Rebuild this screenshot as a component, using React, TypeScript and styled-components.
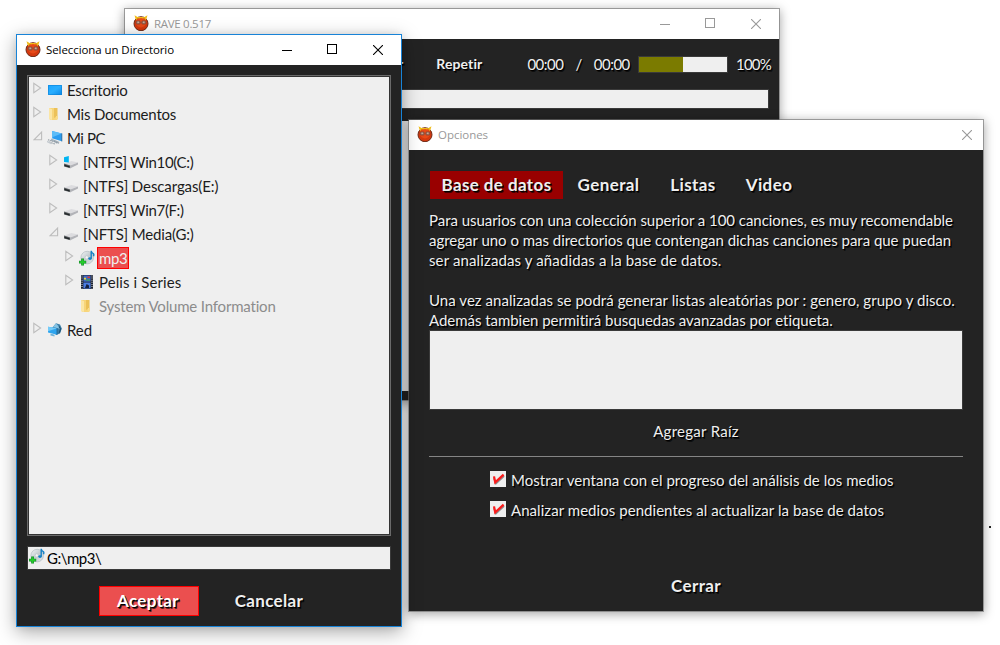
import React from 'react';
import styled, { createGlobalStyle, css } from 'styled-components';

const ink = '#232323';
const paper = '#efefef';

const GlobalStyle = createGlobalStyle`
  * { box-sizing: border-box; }
  body {
    margin: 0;
    background: #fff;
    font-family: Lato, Carlito, Calibri, sans-serif;
    font-size: 15px;
    overflow: hidden;
  }
`;

const Desktop = styled.div`
  position: relative;
  width: 1000px;
  height: 645px;
  overflow: hidden;
  background: #fff;
`;

/* ---------- window chrome ---------- */

type WindowProps = { $x: number; $y: number; $w: number; $h: number; $active?: boolean };

const Window = styled.section<WindowProps>`
  position: absolute;
  left: ${p => p.$x}px;
  top: ${p => p.$y}px;
  width: ${p => p.$w}px;
  height: ${p => p.$h}px;
  display: flex;
  flex-direction: column;
  background: ${ink};
  background-clip: padding-box;
  border: 1px solid ${p => (p.$active ? '#1883d7' : 'rgba(112, 112, 112, 0.62)')};
  box-shadow: ${p =>
    p.$active
      ? '0 5px 18px rgba(0, 0, 0, 0.34), 0 0 7px rgba(0, 0, 0, 0.08)'
      : '0 2px 10px rgba(0, 0, 0, 0.36)'};
`;

const TitleBar = styled.header<{ $active?: boolean; $buttonsRight: number }>`
  flex: none;
  height: 30px;
  display: flex;
  align-items: center;
  padding: 0 ${p => p.$buttonsRight}px 1px 8px;
  background: #fff;
  color: ${p => (p.$active ? '#000' : '#999')};
  > svg { margin-bottom: 1px; }
`;

const Title = styled.h1<{ $track?: number }>`
  flex: 1;
  margin: 0 0 0 5px;
  font: 400 11.5px/16px 'Open Sans', 'Segoe UI', sans-serif;
  letter-spacing: ${p => p.$track ?? 0}px;
`;

const Controls = styled.div`
  display: flex;
  align-items: center;
  gap: 35px;
  svg { display: block; }
`;

const Devil = () => (
  <svg width="16" height="16" viewBox="0 0 16 16">
    <circle cx="8" cy="8.7" r="7" fill="#d4380e" stroke="#6d2b18" strokeWidth="1" />
    <circle cx="8" cy="7.5" r="5" fill="#e64a18" />
    <path d="M1.5 .3 L5.5 2.4 L3 5.2 Z M14.5 .3 L10.5 2.4 L13 5.2 Z M4.5 2h7l-1 1.4h-5z" fill="#f0bd1c" />
    <path d="M6.5 3.2h3v1.2h-3z" fill="#ee4a18" />
    <rect x="3.2" y="6" width="4" height="3" rx="1" fill="#a9745f" stroke="#71463b" strokeWidth=".7" />
    <rect x="8.8" y="6" width="4" height="3" rx="1" fill="#a9745f" stroke="#71463b" strokeWidth=".7" />
    <path d="M4.6 7.2h1.2M10.2 7.2h1.2" stroke="#e6cfc2" strokeWidth="1" />
  </svg>
);

const MinimizeIcon = () => (
  <svg width="10" height="10" stroke="currentColor"><path d="M0 5.5h10" /></svg>
);
const MaximizeIcon = () => (
  <svg width="11" height="11" fill="none" stroke="currentColor"><rect x=".5" y=".5" width="9" height="9" /></svg>
);
const CloseIcon = () => (
  <svg width="10" height="10" stroke="currentColor" strokeWidth="1.1"><path d="M0 0l10 10M10 0l-10 10" /></svg>
);

/* ---------- shared text ---------- */

const Label = styled.span<{ $track?: number; $muted?: boolean }>`
  white-space: pre;
  letter-spacing: ${p => p.$track ?? 0}px;
  ${p => p.$muted && css`color: #8c8c8c;`}
`;

const shadowed = css`
  color: ${paper};
  text-shadow: 1px 1px 0 #000, 1.5px 1.5px 0 rgba(0, 0, 0, 0.6);
`;

/* ---------- player window ---------- */

const Toolbar = styled.div`
  flex: none;
  height: 50px;
  display: flex;
  align-items: center;
  padding: 0 8px 0 273px;
  ${shadowed}
`;

const ToolButton = styled.button`
  border: 0;
  padding: 0;
  margin-right: 33px;
  background: none;
  font: 700 14px/18px Lato, sans-serif;
  letter-spacing: 0.1px;
  ${shadowed}
`;

const Time = styled.div`
  display: flex;
  gap: 12px;
  margin-left: 12px;
  letter-spacing: -0.5px;
  line-height: 18px;
`;

const Volume = styled.div`
  width: 90px;
  height: 17px;
  margin: 0 8px 0 auto;
  border: 1px solid #3a3a3a;
  background: linear-gradient(90deg, #7b7b00 50%, ${paper} 50%);
`;

const SeekBar = styled.div`
  flex: none;
  height: 20px;
  margin: 0 10px 12px;
  border: 1px solid #3a3a3a;
  background: ${paper};
`;

const Playlist = styled.div`
  flex: 1;
  margin: 0 10px 9px;
  background: ${paper};
`;

/* ---------- directory window ---------- */

const Tree = styled.ul`
  list-style: none;
  flex: none;
  height: 461px;
  margin: 10px 10px 0;
  padding: 3px 0 0;
  border: 1px solid #6a6a6a;
  outline: 1px solid #333;
  outline-offset: -2px;
  background: ${paper};
`;

const TreeRow = styled.li<{ $level: number }>`
  height: 24px;
  display: flex;
  align-items: center;
  padding: 0 0 2px ${p => 5 + p.$level * 16}px;
  line-height: 20px;
  color: #1c1c1c;
  svg { flex: none; display: block; }
`;

const Expander = styled.span`
  width: 10px;
  height: 12px;
  margin: 0 4px 4px 0;
`;

const RowIcon = styled.span`
  width: 16px;
  height: 16px;
  margin-right: 4px;
`;

const NodeLabel = styled(Label)<{ $selected?: boolean }>`
  ${p =>
    p.$selected &&
    css`
      height: 22px;
      line-height: 20px;
      margin: 0 0 0 -2px;
      padding: 0 1px;
      border: 1px solid #f00;
      background: #eb4f4f;
      color: ${paper};
    `}
`;

const PathField = styled.div`
  flex: none;
  display: flex;
  align-items: center;
  height: 24px;
  margin: 10px 10px 0;
  padding: 0 1px;
  border: 1px solid #3a3a3a;
  background: ${paper};
  color: #000;
  svg { display: block; margin: 0 2px 4px 0; }
`;

const DialogActions = styled.div`
  display: flex;
  gap: 20px;
  margin: 16px 0 0 82px;
`;

const ActionButton = styled.button<{ $primary?: boolean }>`
  width: 100px;
  height: 30px;
  padding: 0 0 1px;
  border: 1px solid ${p => (p.$primary ? '#f00' : 'transparent')};
  background: ${p => (p.$primary ? '#eb4f4f' : 'transparent')};
  font: 700 17px/26px Lato, sans-serif;
  letter-spacing: 0.35px;
  ${shadowed}
  ${p => p.$primary && css`color: #fff; padding-right: 2px;`}
`;

/* ---------- options window ---------- */

const OptionsBody = styled.div`
  flex: 1;
  display: flex;
  flex-direction: column;
  padding: 21px 20px 0;
`;

const Tabs = styled.nav`
  flex: none;
  display: flex;
  height: 28px;
  padding-left: 1px;
`;

const Tab = styled.button<{ $selected?: boolean; $w: number }>`
  width: ${p => p.$w}px;
  padding: 0;
  border: 0;
  background: ${p => (p.$selected ? '#990000' : 'transparent')};
  font: 700 17px/28px Lato, sans-serif;
  letter-spacing: 0.4px;
  ${shadowed}
`;

const Help = styled.p`
  flex: none;
  display: flex;
  flex-direction: column;
  margin: 11px 0 0;
  line-height: 20px;
  ${shadowed}
`;

const HelpGap = styled.span`
  height: 20px;
`;

const RootList = styled.div`
  flex: none;
  height: 80px;
  border: 1px solid #3a3a3a;
  background: ${paper};
`;

const AddRoot = styled.button`
  align-self: center;
  margin: 11px 0 0;
  padding: 0;
  border: 0;
  background: none;
  font: 400 15px/20px Lato, sans-serif;
  ${shadowed}
`;

const Divider = styled.hr`
  flex: none;
  width: 100%;
  margin: 15px 0 14px;
  border: 0;
  border-top: 1px solid #858585;
`;

const CheckRow = styled.label`
  flex: none;
  display: flex;
  height: 30px;
  padding-left: 61px;
  line-height: 18px;
  ${shadowed}
  svg { flex: none; margin-right: 5px; }
`;

const CheckBox = () => (
  <svg width="16" height="16" viewBox="0 0 16 16">
    <rect width="16" height="16" fill="#efefef" />
    <path d="M4 7.2L6 12.4L14 5" fill="none" stroke="#8d8d8d" strokeWidth="1.8" />
    <path d="M4 5.4L5.2 11.4L13.6 3.6" fill="none" stroke="#fb1c1c" strokeWidth="2.2" />
  </svg>
);

const Footer = styled.div`
  display: flex;
  justify-content: center;
  margin-top: 40px;
`;

const Speck = styled.i`
  position: absolute;
  left: 989px;
  top: 526px;
  width: 2px;
  height: 2px;
  background: #222;
`;

/* ---------- tree icons ---------- */

const DesktopIcon = () => (
  <svg width="16" height="16">
    <defs>
      <linearGradient id="desk" x1="0" y1="0" x2="1" y2="1">
        <stop offset="0" stopColor="#1aa5ff" />
        <stop offset=".5" stopColor="#2aaeff" />
        <stop offset="1" stopColor="#0a86e4" />
      </linearGradient>
    </defs>
    <rect x="1" y="3" width="14" height="10" fill="url(#desk)" />
    <path d="M1.5 12.5V3.5h13v9z" fill="none" stroke="#0c80d4" opacity=".55" />
  </svg>
);

const FolderIcon = () => (
  <svg width="16" height="16">
    <path d="M2 2h8v12H4l-2-1z" fill="#f7d57a" />
    <path d="M2 2l3 1.2V14l-3-1z" fill="#fbe6a6" />
    <path d="M7 2h3.5v9H9l-2 1z" fill="#ecc158" />
    <path d="M9 10h2v3.6H8.6z" fill="#f9dc8b" />
  </svg>
);

const ComputerIcon = () => (
  <svg width="16" height="16">
    <path d="M5 1l9.8 2.6v7.6L5 8.2z" fill="#2b9cf0" />
    <path d="M5 1l9.8 2.6-8.4 3.2L5 8.2z" fill="#5cbcf8" />
    <path d="M14.8 3.4v8" stroke="#1b5e94" strokeWidth=".8" />
    <path d="M4.5 8.6l8 3.4-2.6 1.8-6.4-3.6z" fill="#a8b4be" />
    <path d="M1 9.8l5 1.6M2 12l6 2M7 11l5 2.2" stroke="#8a959e" strokeWidth="1.1" strokeDasharray="1.5 .8" />
    <path d="M0 11.4l4.4 2.2" stroke="#c4cacf" strokeWidth="1.3" />
  </svg>
);

const DriveIcon = ({ system = false }: { system?: boolean }) => (
  <svg width="16" height="16">
    <path d="M1 9.6L8.5 7L15 8.4L7.4 11.4z" fill="#dcdcdf" />
    <path d="M1 9.6l6.4 1.8v2.8L1 12.4z" fill="#5c6062" />
    <path d="M7.4 11.4l7.6-3v2.2l-7.6 3.6z" fill="#b2b3b8" />
    <path d="M1.6 11.4l4.8 1.5" stroke="#22272a" strokeWidth="1.5" />
    {system && <path d="M1 3.2L5.8 2v6.4L1 8z" fill="#00b5f2" />}
  </svg>
);

const MusicIcon = () => (
  <svg width="16" height="16">
    <defs>
      <linearGradient id="disc" x1="0" y1="0" x2="1" y2="1">
        <stop offset="0" stopColor="#f3f5f6" />
        <stop offset=".5" stopColor="#c2cace" />
        <stop offset="1" stopColor="#e2e8eb" />
      </linearGradient>
    </defs>
    <circle cx="8.2" cy="7.6" r="6.3" fill="url(#disc)" stroke="#b2bbc0" strokeWidth=".7" />
    <circle cx="7.8" cy="7.4" r="1.6" fill="#f4f4f4" stroke="#b7c1c6" strokeWidth=".6" />
    <path d="M12.2 8.4V.8q.4 2 2.1 2.8q1 .8.2 2.6" fill="none" stroke="#1681c4" strokeWidth="1.4" />
    <ellipse cx="11" cy="8.6" rx="1.8" ry="1.3" fill="#1681c4" />
    <path d="M3.6 8.6v7M0 12.1h7.2" stroke="#138a2a" strokeWidth="2.8" />
    <path d="M3.6 9.2v5.8M.6 12.1h6" stroke="#25cb2a" strokeWidth="1.8" />
  </svg>
);

const FilmIcon = () => (
  <svg width="16" height="16">
    <rect x="2" y="1" width="12" height="14" fill="#1d2230" />
    <path d="M3 1.5v13M13 1.5v13" stroke="#c9ced6" strokeWidth="1.1" strokeDasharray="1 1.1" />
    <rect x="4.4" y="1.5" width="7.2" height="6.2" fill="#4068c4" />
    <rect x="4.4" y="8.5" width="7.2" height="6" fill="#4a7ce2" />
    <path d="M5 4.6h2" stroke="#e7d73a" strokeWidth="1.6" />
    <path d="M8.5 3.3h2.5" stroke="#d63838" strokeWidth="1.6" />
    <path d="M7 6h4" stroke="#3da64c" strokeWidth="1.3" />
    <path d="M6 14l1.6-4 2.4 1.6V14z" fill="#16213f" />
  </svg>
);

const NetworkIcon = () => (
  <svg width="16" height="16">
    <path d="M9 1.2l4 1.2 1.8 4.2-1.8 5-4 1.4-4-7z" fill="#3c7fa8" />
    <path d="M9 1.2l2.5 3 3.3 3-3-.7L6 5z" fill="#87c4e4" />
    <path d="M12 4.4l1.6 2.6-1.3 3.8" stroke="#1d5579" fill="none" strokeWidth="1.3" />
    <path d="M1 4.8l9 1.4v6.6L1 10.4z" fill="#2ea4ee" />
    <path d="M1 4.8l9 1.4-9 3z" fill="#74cbf8" />
    <path d="M10 6.2v6.6" stroke="#185f94" strokeWidth=".8" />
    <path d="M3.5 11.6l4 1.2v1.6l-4-1z" fill="#6fb2d8" />
  </svg>
);

const Arrow = ({ open }: { open: boolean }) => (
  <svg width="10" height="12" fill="none" stroke="#bdbdbd" strokeWidth="1.1">
    {open ? <path d="M1 9.8H8.6V2z" /> : <path d="M.8 1.4v9.2l6.8-4.6z" />}
  </svg>
);

type Node = {
  text: string;
  level: number;
  icon: React.ReactNode;
  track: number;
  open?: boolean;
  leaf?: boolean;
  muted?: boolean;
  selected?: boolean;
};

const nodes: Node[] = [
  { text: 'Escritorio', level: 0, icon: <DesktopIcon />, track: -0.2 },
  { text: 'Mis Documentos', level: 0, icon: <FolderIcon />, track: -0.2 },
  { text: 'Mi PC', level: 0, icon: <ComputerIcon />, track: -0.45, open: true },
  { text: '[NTFS] Win10(C:)', level: 1, icon: <DriveIcon system />, track: -0.33 },
  { text: '[NTFS] Descargas(E:)', level: 1, icon: <DriveIcon />, track: -0.1 },
  { text: '[NTFS] Win7(F:)', level: 1, icon: <DriveIcon />, track: -0.33 },
  { text: '[NFTS] Media(G:)', level: 1, icon: <DriveIcon />, track: -0.16, open: true },
  { text: 'mp3', level: 2, icon: <MusicIcon />, track: -0.4, selected: true },
  { text: 'Pelis i Series', level: 2, icon: <FilmIcon />, track: 0.1 },
  { text: 'System Volume Information', level: 2, icon: <FolderIcon />, track: -0.18, leaf: true, muted: true },
  { text: 'Red', level: 0, icon: <NetworkIcon />, track: -0.1 },
];

const tabs = [
  { text: 'Base de datos', w: 133, selected: true },
  { text: 'General', w: 91 },
  { text: 'Listas', w: 78 },
  { text: 'Video', w: 74 },
];

export default function App() {
  return (
    <>
      <GlobalStyle />
      <Desktop>
        <Window $x={124} $y={8} $w={656} $h={393}>
          <TitleBar $buttonsRight={18}>
            <Devil />
            <Title $track={-0.3}>RAVE 0.517</Title>
            <Controls><MinimizeIcon /><MaximizeIcon /><CloseIcon /></Controls>
          </TitleBar>
          <Toolbar>
            <ToolButton>r</ToolButton>
            <ToolButton>Repetir</ToolButton>
            <Time><span>00:00</span><span>/</span><span>00:00</span></Time>
            <Volume />
            <Label $track={-0.8}>100%</Label>
          </Toolbar>
          <SeekBar />
          <Playlist />
        </Window>

        <Window $x={408} $y={119} $w={576} $h={493}>
          <TitleBar $buttonsRight={11}>
            <Devil />
            <Title $track={-0.03}>Opciones</Title>
            <Controls><CloseIcon /></Controls>
          </TitleBar>
          <OptionsBody>
            <Tabs>
              {tabs.map(t => (
                <Tab key={t.text} $selected={t.selected} $w={t.w}>{t.text}</Tab>
              ))}
            </Tabs>
            <Help>
              <Label $track={-0.04}>Para usuarios con una colección superior a 100 canciones, es muy recomendable</Label>
              <Label $track={-0.02}>agregar uno o mas directorios que contengan dichas canciones para que puedan</Label>
              <Label $track={0.13}>ser analizadas y añadidas a la base de datos.</Label>
              <HelpGap />
              <Label $track={0.05}>Una vez analizadas se podrá generar listas aleatórias por : genero, grupo y disco.</Label>
              <Label $track={-0.04}>Además tambien permitirá busquedas avanzadas por etiqueta.</Label>
            </Help>
            <RootList />
            <AddRoot><Label $track={0.28}>Agregar Raíz</Label></AddRoot>
            <Divider />
            <CheckRow>
              <CheckBox />
              <Label $track={0.03}>Mostrar ventana con el progreso del análisis de los medios</Label>
            </CheckRow>
            <CheckRow>
              <CheckBox />
              <Label $track={0.05}>Analizar medios pendientes al actualizar la base de datos</Label>
            </CheckRow>
            <Footer><ActionButton>Cerrar</ActionButton></Footer>
          </OptionsBody>
        </Window>

        <Window $x={16} $y={34} $w={386} $h={593} $active>
          <TitleBar $active $buttonsRight={18}>
            <Devil />
            <Title $track={-0.08}>Selecciona un Directorio</Title>
            <Controls><MinimizeIcon /><MaximizeIcon /><CloseIcon /></Controls>
          </TitleBar>
          <Tree>
            {nodes.map(n => (
              <TreeRow key={n.text} $level={n.level}>
                <Expander>{!n.leaf && <Arrow open={!!n.open} />}</Expander>
                <RowIcon>{n.icon}</RowIcon>
                <NodeLabel $track={n.track} $muted={n.muted} $selected={n.selected}>{n.text}</NodeLabel>
              </TreeRow>
            ))}
          </Tree>
          <PathField>
            <MusicIcon />
            <Label $track={-0.5}>G:\mp3\</Label>
          </PathField>
          <DialogActions>
            <ActionButton $primary>Aceptar</ActionButton>
            <ActionButton>Cancelar</ActionButton>
          </DialogActions>
        </Window>
        <Speck />
      </Desktop>
    </>
  );
}
